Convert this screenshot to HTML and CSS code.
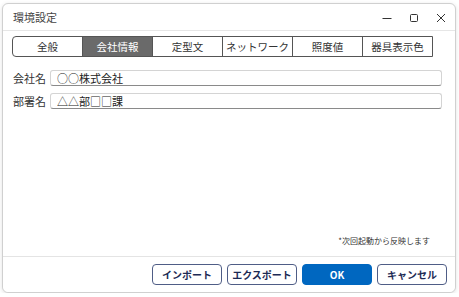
FILE: index.html
```html
<!DOCTYPE html>
<html lang="ja">
<head>
  <meta charset="UTF-8" />
  <title>環境設定</title>
  <link rel="stylesheet" href="styles.css">
</head>
<body>

<div class="window">
  <div class="titlebar">
    <span class="title">環境設定</span>
    <div class="caption-btns">
      <svg width="10" height="10" viewBox="0 0 10 10"><path d="M0.5 5.5h9" stroke="#333" stroke-width="1"/></svg>
      <svg width="10" height="10" viewBox="0 0 10 10"><rect x="1.5" y="1.5" width="7" height="7" rx="1" fill="none" stroke="#333" stroke-width="1"/></svg>
      <svg width="10" height="10" viewBox="0 0 10 10"><path d="M1 1L9 9M9 1L1 9" stroke="#333" stroke-width="1"/></svg>
    </div>
  </div>

  <div class="content">
    <div class="tabs">
      <div class="tab">全般</div>
      <div class="tab active">会社情報</div>
      <div class="tab">定型文</div>
      <div class="tab">ネットワーク</div>
      <div class="tab">照度値</div>
      <div class="tab">器具表示色</div>
    </div>

    <div class="fields">
      <div class="row">
        <label>会社名</label>
        <input type="text" value="○○株式会社">
      </div>
      <div class="row">
        <label>部署名</label>
        <input type="text" value="△△部□□課">
      </div>
    </div>

    <div class="note">*次回起動から反映します</div>
  </div>

  <div class="footer">
    <button class="btn">インポート</button>
    <button class="btn">エクスポート</button>
    <button class="btn btn-primary">OK</button>
    <button class="btn">キャンセル</button>
  </div>
</div>

</body>
</html>
```

FILE: styles.css
```css
* { box-sizing: border-box; }
body {
  margin: 0;
  background: #ffffff;
  font-family: "Noto Sans CJK JP", "Noto Sans", sans-serif;
  color: #222;
}
.window {
  margin: 3px 0 0 2px;
  width: 454px;
  height: 290px;
  background: #fff;
  border: 1px solid #d0d0d0;
  border-radius: 6px;
  box-shadow: 0 1px 4px rgba(0, 0, 0, 0.12);
  display: flex;
  flex-direction: column;
}
.titlebar {
  height: 27px;
  flex-shrink: 0;
  display: flex;
  align-items: center;
  justify-content: space-between;
  padding: 0 9px 0 10px;
  border-bottom: 1px solid #e6e6e6;
}
.title {
  font-size: 11px;
  color: #444;
  line-height: 1;
  margin-top: 1px;
}
.caption-btns {
  display: flex;
  gap: 17px;
  align-items: center;
  margin-top: 2px;
}
.caption-btns svg { display: block; }
.content {
  flex: 1;
  display: flex;
  flex-direction: column;
  padding: 5px 13px 0 9px;
}
.tabs {
  display: flex;
  width: 421px;
  height: 21px;
  border: 1px solid #555;
  border-radius: 4px 0 0 4px;
}
.tab {
  flex: 1;
  display: flex;
  align-items: center;
  justify-content: center;
  font-size: 10.5px;
  color: #333;
  border-left: 1px solid #555;
}
.tab:first-child {
  border-left: none;
  border-radius: 3px 0 0 3px;
}
.tab.active {
  background: #6a6a6a;
  color: #fff;
}
.fields {
  margin-top: 13px;
  display: flex;
  flex-direction: column;
  gap: 7px;
}
.row {
  display: flex;
  align-items: center;
  padding-left: 1px;
}
.row label {
  width: 37px;
  font-size: 11px;
  color: #333;
}
.row input {
  flex: 1;
  height: 16px;
  border: 1px solid #d4d4d4;
  border-bottom: 1px solid #8a8a8a;
  border-radius: 3px;
  padding: 0 6px;
  font-family: inherit;
  font-size: 11px;
  color: #222;
  background: #fff;
}
.note {
  margin-top: auto;
  margin-bottom: 10px;
  text-align: right;
  padding-right: 12px;
  font-size: 8px;
  color: #333;
}
.footer {
  height: 36px;
  flex-shrink: 0;
  border-top: 1px solid #e4e4e4;
  display: flex;
  justify-content: flex-end;
  align-items: flex-start;
  gap: 5px;
  padding: 7px 8px 0 0;
  background: #fff;
  border-radius: 0 0 6px 6px;
}
.btn {
  width: 70px;
  height: 21px;
  border: 1.5px solid #4f5d86;
  border-radius: 4px;
  background: #fff;
  color: #1d2b55;
  font-family: inherit;
  font-size: 10px;
  font-weight: bold;
  padding: 0;
  cursor: pointer;
}
.btn-primary {
  background: #0067c0;
  border-color: #0067c0;
  color: #fff;
}
```
